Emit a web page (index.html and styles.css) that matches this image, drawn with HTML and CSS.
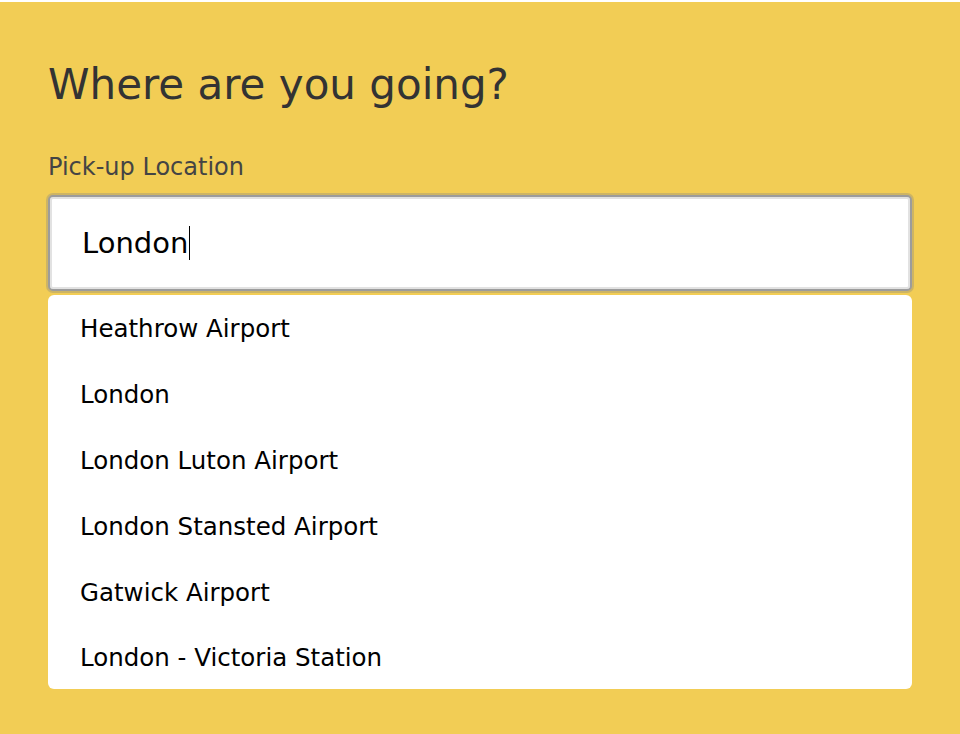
FILE: index.html
```html
<!DOCTYPE html>
<html>
<head>
<meta charset="utf-8">
<link rel="stylesheet" href="styles.css">
</head>
<body>
<div class="topbar"></div>
<main class="panel">
  <h1 class="title">Where are you going?</h1>
  <label class="label">Pick-up Location</label>
  <div class="input"><span class="value">London</span><span class="caret"></span></div>
  <ul class="list">
    <li>Heathrow Airport</li>
    <li>London</li>
    <li>London Luton Airport</li>
    <li>London Stansted Airport</li>
    <li>Gatwick Airport</li>
    <li>London - Victoria Station</li>
  </ul>
</main>
</body>
</html>
```
FILE: styles.css
```css
html, body {
  margin: 0;
  padding: 0;
  height: 100%;
}
body {
  background: #f2cd55;
  font-family: "DejaVu Sans", sans-serif;
}
.topbar {
  height: 2px;
  background: #ffffff;
}
.panel {
  padding: 0 48px 0 48px;
  display: flex;
  flex-direction: column;
}
.title {
  margin: 53px 0 0 0;
  font-weight: normal;
  font-size: 42px;
  line-height: 60px;
  color: #333333;
}
.label {
  margin-top: 37px;
  font-size: 24px;
  line-height: 30px;
  color: #444444;
}
.input {
  margin-top: 13px;
  height: 96px;
  box-sizing: border-box;
  border: 2px solid #9c9c9c;
  border-radius: 5px;
  background: #fff;
  box-shadow: 0 0 0 2px rgba(160, 150, 120, 0.45), inset 0 0 0 2px #e2e2e2;
  display: flex;
  align-items: center;
  padding-left: 32px;
}
.value {
  font-size: 29px;
  color: #000;
}
.caret {
  width: 1px;
  height: 34px;
  background: #000;
  margin-left: 1px;
}
.list {
  list-style: none;
  margin: 4px 0 0 0;
  padding: 0;
  background: #fff;
  border-radius: 6px;
}
.list li {
  height: 66px;
  display: flex;
  align-items: center;
  padding-left: 32px;
  font-size: 24.5px;
  color: #000;
}
.list li:last-child {
  height: 64px;
}
```
